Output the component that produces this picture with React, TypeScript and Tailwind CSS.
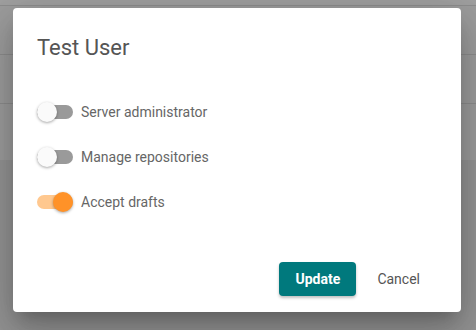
import { useState } from "react";

type Perm = { key: string; label: string };

const PERMS: Perm[] = [
  { key: "admin", label: "Server administrator" },
  { key: "repos", label: "Manage repositories" },
  { key: "drafts", label: "Accept drafts" },
];

function Toggle({ on, onChange }: { on: boolean; onChange: () => void }) {
  return (
    <button
      type="button"
      onClick={onChange}
      className="relative h-5 w-9 shrink-0"
    >
      <span
        className={`absolute inset-x-0 top-[3px] h-3.5 rounded-full ${
          on ? "bg-[#ffc88f]" : "bg-[#9a9a9a]"
        }`}
      />
      <span
        className={`absolute top-0 h-5 w-5 rounded-full shadow-[0_1px_3px_rgba(0,0,0,0.35)] ${
          on ? "right-0 bg-[#ff9228]" : "left-0 bg-[#fafafa]"
        }`}
      />
    </button>
  );
}

export default function App() {
  const [perms, setPerms] = useState<Record<string, boolean>>({
    admin: false,
    repos: false,
    drafts: true,
  });

  return (
    <div className="relative h-[330px] w-full overflow-hidden bg-[#959595] font-['Roboto',sans-serif]">
      {/* page behind the backdrop */}
      <div className="flex flex-col">
        <div className="h-[5px] bg-[#a0a0a0]" />
        <div className="h-[49px] border-t border-[#8d8d8d] bg-[#9d9d9d]" />
        <div className="h-[49px] border-t border-[#8d8d8d] bg-[#9d9d9d]" />
        <div className="h-[57px] border-t border-[#8d8d8d] bg-[#9d9d9d]" />
      </div>

      <div className="absolute left-[13px] top-[8px] flex h-[304px] w-[448px] flex-col rounded bg-white shadow-[0_11px_15px_-7px_rgba(0,0,0,0.2),0_24px_38px_3px_rgba(0,0,0,0.14),0_9px_46px_8px_rgba(0,0,0,0.12)]">
        <h2 className="px-6 pt-6 text-[22px] leading-8 text-[#555]">
          Test User
        </h2>

        <div className="mt-[25px] flex flex-col px-6">
          {PERMS.map((p) => (
            <label key={p.key} className="flex h-[45px] items-center">
              <Toggle
                on={perms[p.key]}
                onChange={() =>
                  setPerms((s) => ({ ...s, [p.key]: !s[p.key] }))
                }
              />
              <span className="ml-2 text-sm text-[#666]">{p.label}</span>
            </label>
          ))}
        </div>

        <div className="mt-auto flex items-center justify-end gap-1 pb-4 pr-6">
          <button
            type="button"
            className="h-[34px] w-[77px] rounded bg-[#00797d] text-sm font-bold text-white shadow-[0_2px_3px_rgba(0,0,0,0.25)]"
          >
            Update
          </button>
          <button
            type="button"
            className="h-[34px] px-[17px] text-sm text-[#555]"
          >
            Cancel
          </button>
        </div>
      </div>
    </div>
  );
}
